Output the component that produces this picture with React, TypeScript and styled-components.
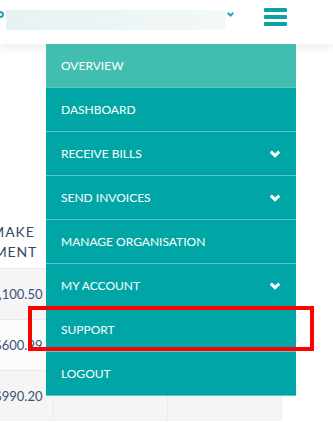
import { createGlobalStyle } from 'styled-components';
import styled from 'styled-components';

const GlobalStyle = createGlobalStyle`
  html, body {
    margin: 0;
    padding: 0;
    background: #ffffff;
    font-family: Lato, "Noto Sans", sans-serif;
  }
`;

const Page = styled.div`
  position: relative;
  width: 333px;
  height: 422px;
  overflow: hidden;
  background: #ffffff;
`;

const TopBar = styled.header`
  position: relative;
  z-index: 2;
  height: 44px;
  display: flex;
  align-items: flex-start;
  background: #ffffff;
  box-shadow: 0 3px 10px rgba(0, 0, 0, 0.09);
`;

const Ring = styled.span`
  box-sizing: border-box;
  width: 8px;
  height: 7px;
  margin: 11px 0 0 -4px;
  border: 2px solid #19a7b4;
  border-radius: 50%;
`;

const BlurredField = styled.div`
  width: 220px;
  height: 20px;
  margin: 10px 0 0 2px;
  background: linear-gradient(90deg, #e6f2f2 0%, #ecf5f5 50%, #f3f9f9 100%);
`;

const Caret = styled.svg`
  margin: 12px 0 0 1px;
`;

const Burger = styled.button`
  display: flex;
  flex-direction: column;
  gap: 3px;
  margin: 8px 0 0 30px;
  padding: 0;
  border: none;
  background: none;
  cursor: pointer;
  span {
    display: block;
    width: 23px;
    height: 4px;
    border-radius: 1px;
    background: #0aa4a6;
  }
`;

const Content = styled.div`
  padding-top: 168px;
  overflow: hidden;
`;

const Table = styled.table`
  margin-left: -34px;
  border-collapse: collapse;
  color: #35495f;
  font-size: 14px;
  letter-spacing: 0.9px;
`;

const HeadCell = styled.th<{ $w: number }>`
  width: ${(p) => p.$w}px;
  height: 56px;
  padding: 5px 0 0 0;
  text-align: left;
  font-weight: 400;
  line-height: 20px;
  vertical-align: middle;
  box-sizing: border-box;
`;

const Row = styled.tr<{ $shade: boolean }>`
  background: ${(p) => (p.$shade ? '#f5f5f5' : '#fcfcfc')};
  border-top: 1px solid #e8e8e8;
`;

const Cell = styled.td`
  height: 50px;
  padding: 0 10px 0 0;
  text-align: right;
  color: #3b5275;
  font-size: 13px;
  letter-spacing: 0;
  border-right: 1px solid #ebebeb;
`;

const Menu = styled.nav`
  position: absolute;
  z-index: 3;
  left: 46px;
  top: 44px;
  width: 250px;
  display: flex;
  flex-direction: column;
  background: #00a6a6;
`;

const MenuItem = styled.a<{ $active?: boolean }>`
  display: flex;
  align-items: center;
  justify-content: space-between;
  height: 43px;
  padding: 0 15px;
  border-bottom: 1px solid #5cc6c4;
  background: ${(p) => (p.$active ? '#41beb0' : '#00a6a6')};
  color: #ffffff;
  font-size: 12px;
  text-transform: uppercase;
  text-decoration: none;
`;

const Highlight = styled.div`
  position: absolute;
  z-index: 4;
  left: 28px;
  top: 306px;
  width: 286px;
  height: 45px;
  box-sizing: border-box;
  border: 4px solid #ff0000;
  pointer-events: none;
`;

const Chevron = () => (
  <svg width="12" height="8" viewBox="0 0 12 8">
    <polyline points="1.8,1.6 6,5.6 10.2,1.6" fill="none" stroke="#ffffff" strokeWidth="3" />
  </svg>
);

const menu = [
  { label: 'Overview', active: true },
  { label: 'Dashboard' },
  { label: 'Receive Bills', sub: true },
  { label: 'Send Invoices', sub: true },
  { label: 'Manage Organisation' },
  { label: 'My Account', sub: true },
  { label: 'Support' },
  { label: 'Logout' },
];

const rows = ['$2,100.50', '$600.99', '$990.20'];

export default function App() {
  return (
    <Page>
      <GlobalStyle />
      <TopBar>
        <Ring />
        <BlurredField />
        <Caret width="7" height="5" viewBox="0 0 7 5">
          <polyline points="0.8,0.8 3.5,3.6 6.2,0.8" fill="none" stroke="#19a7b4" strokeWidth="2" />
        </Caret>
        <Burger aria-label="menu">
          <span />
          <span />
          <span />
        </Burger>
      </TopBar>
      <Content>
        <Table>
          <thead>
            <tr>
              <HeadCell $w={87}>TO MAKE PAYMENT</HeadCell>
              <HeadCell $w={114}></HeadCell>
              <HeadCell $w={114}></HeadCell>
            </tr>
          </thead>
          <tbody>
            {rows.map((amt, i) => (
              <Row key={amt} $shade={i % 2 === 0}>
                <Cell>{amt}</Cell>
                <Cell />
                <Cell />
              </Row>
            ))}
          </tbody>
        </Table>
      </Content>
      <Menu>
        {menu.map((m) => (
          <MenuItem key={m.label} $active={m.active} href="#">
            {m.label}
            {m.sub && <Chevron />}
          </MenuItem>
        ))}
      </Menu>
      <Highlight />
    </Page>
  );
}
